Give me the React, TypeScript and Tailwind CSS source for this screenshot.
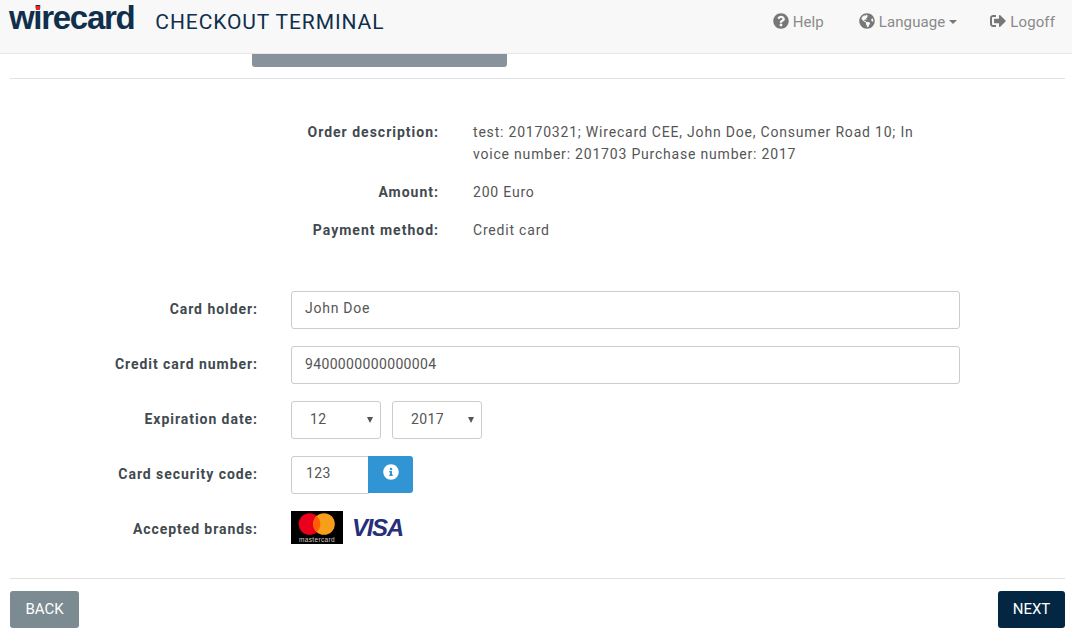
import { FaQuestionCircle, FaGlobeAmericas, FaSignOutAlt, FaInfoCircle } from "react-icons/fa";

const SUMMARY = [
  {
    label: "Order description:",
    value: "test: 20170321; Wirecard CEE, John Doe, Consumer Road 10; Invoice number: 201703 Purchase number: 2017",
    rowClass: "h-[44px] pt-[5px]",
  },
  { label: "Amount:", value: "200 Euro", rowClass: "h-[38px] pt-[5px] mt-[16px]" },
  { label: "Payment method:", value: "Credit card", rowClass: "h-[38px] pt-[5px]" },
];

function Field({ label, children }: { label: string; children: React.ReactNode }) {
  return (
    <div className="flex h-[38px] items-center">
      <div className="w-[258px] pb-[2px] text-right font-bold tracking-[0.95px] text-[#414a4f]">{label}</div>
      <div className="ml-[33px] flex flex-1 items-center">{children}</div>
    </div>
  );
}

function Select({ value }: { value: string }) {
  return (
    <div className="relative flex h-[38px] w-[90px] items-center rounded-[3px] border border-[#ccc] bg-white pb-[2px] pl-[18px] text-[#555]">
      {value}
      <span className="absolute right-[7px] top-[15px] h-0 w-0 border-x-[3px] border-t-[6px] border-x-transparent border-t-[#555]" />
    </div>
  );
}

export default function App() {
  return (
    <div className="h-[630px] w-[1072px] overflow-hidden bg-white font-['Roboto',sans-serif] text-[14px] tracking-[0.35px] text-[#555]">
      <header className="flex h-[54px] items-start border-b border-[#e7e7e7] bg-[#f8f8f8]">
        <div className="relative ml-[9px] font-['Liberation_Sans',sans-serif] text-[33px] font-bold leading-[36px] tracking-[-1.3px] text-[#0f2f4d]">
          wirecard
          <span className="absolute left-[27px] top-[6px] h-[4px] w-[4px] bg-[#e8262b]" />
        </div>
        <div className="ml-[21px] mt-[10px] text-[21px] leading-[24px] tracking-[0.9px] text-[#0f2f4d]">CHECKOUT TERMINAL</div>
        <nav className="ml-auto mr-[17px] mt-[12px] flex items-center text-[15px] leading-[20px] tracking-[0.1px] text-[#8a8a8a]">
          <span className="flex items-center gap-[4px]">
            <FaQuestionCircle className="mb-[3px] text-[16px] text-[#777]" />
            Help
          </span>
          <span className="ml-[35px] flex items-center gap-[4px]">
            <FaGlobeAmericas className="mb-[3px] text-[16px] text-[#777]" />
            Language
            <span className="h-0 w-0 border-x-[4px] border-t-[4px] border-x-transparent border-t-[#777]" />
          </span>
          <span className="ml-[33px] flex items-center gap-[4px]">
            <FaSignOutAlt className="mb-[3px] text-[16px] text-[#777]" />
            Logoff
          </span>
        </nav>
      </header>

      <div className="ml-[252px] h-[13px] w-[255px] rounded-b-[3px] bg-[#87929c]" />
      <div className="ml-[10px] mr-[7px] mt-[11px] h-px bg-[#e0e0e0]" />

      <section className="mt-[37px] flex flex-col">
        {SUMMARY.map((row) => (
          <div key={row.label} className={`flex ${row.rowClass}`}>
            <div className="w-[439px] text-right font-bold leading-[22px] tracking-[1px] text-[#414a4f]">{row.label}</div>
            <div className="ml-[34px] w-[442px] break-all leading-[22px] tracking-[0.8px]">{row.value}</div>
          </div>
        ))}
      </section>

      <section className="mt-[39px] flex flex-col gap-[17px]">
        <Field label="Card holder:">
          <div className="flex h-[38px] w-[669px] items-center rounded-[3px] border border-[#ccc] bg-white pb-[3px] pl-[13px] tracking-[0.75px]">John Doe</div>
        </Field>
        <Field label="Credit card number:">
          <div className="flex h-[38px] w-[669px] items-center rounded-[3px] border border-[#ccc] bg-white pb-[2px] pl-[13px]">9400000000000004</div>
        </Field>
        <Field label="Expiration date:">
          <Select value="12" />
          <div className="ml-[11px]">
            <Select value="2017" />
          </div>
        </Field>
        <Field label="Card security code:">
          <div className="flex h-[38px] w-[78px] items-center rounded-l-[3px] border border-[#ccc] bg-white pb-[3px] pl-[14px]">123</div>
          <div className="ml-[-1px] flex h-[37px] w-[45px] items-start justify-center self-start rounded-r-[3px] bg-[#3195d3] pt-[8px]">
            <FaInfoCircle className="text-[16px] text-white" />
          </div>
        </Field>
        <div className="flex h-[33px] items-center">
          <div className="w-[258px] pt-[3px] text-right font-bold tracking-[0.93px] text-[#414a4f]">Accepted brands:</div>
          <div className="ml-[33px] flex items-center">
            <svg width="52" height="33" viewBox="0 0 52 33">
              <rect width="52" height="33" fill="#000" />
              <circle cx="18.5" cy="13" r="10.8" fill="#eb001b" />
              <circle cx="33" cy="13" r="10.8" fill="#f79e1b" />
              <path d="M25.75 5a10.8 10.8 0 0 1 0 16a10.8 10.8 0 0 1 0-16z" fill="#ff5f00" />
              <text x="26" y="30.5" textAnchor="middle" fontSize="6.5" fontFamily="Liberation Sans, sans-serif" fill="#d0d0d0">mastercard</text>
            </svg>
            <div className="ml-[9px] font-['Liberation_Sans',sans-serif] text-[24px] font-bold italic leading-[33px] tracking-[-1.3px] text-[#262f78]">VISA</div>
          </div>
        </div>
      </section>

      <div className="ml-[10px] mr-[7px] mt-[34px] h-px bg-[#e0e0e0]" />
      <footer className="ml-[10px] mr-[7px] mt-[12px] flex justify-between">
        <button type="button" className="h-[37px] w-[69px] rounded-[3px] bg-[#7c8a91] text-[15px] tracking-normal text-white">BACK</button>
        <button type="button" className="h-[37px] w-[67px] rounded-[3px] bg-[#032743] text-[15px] tracking-normal text-white">NEXT</button>
      </footer>
    </div>
  );
}
